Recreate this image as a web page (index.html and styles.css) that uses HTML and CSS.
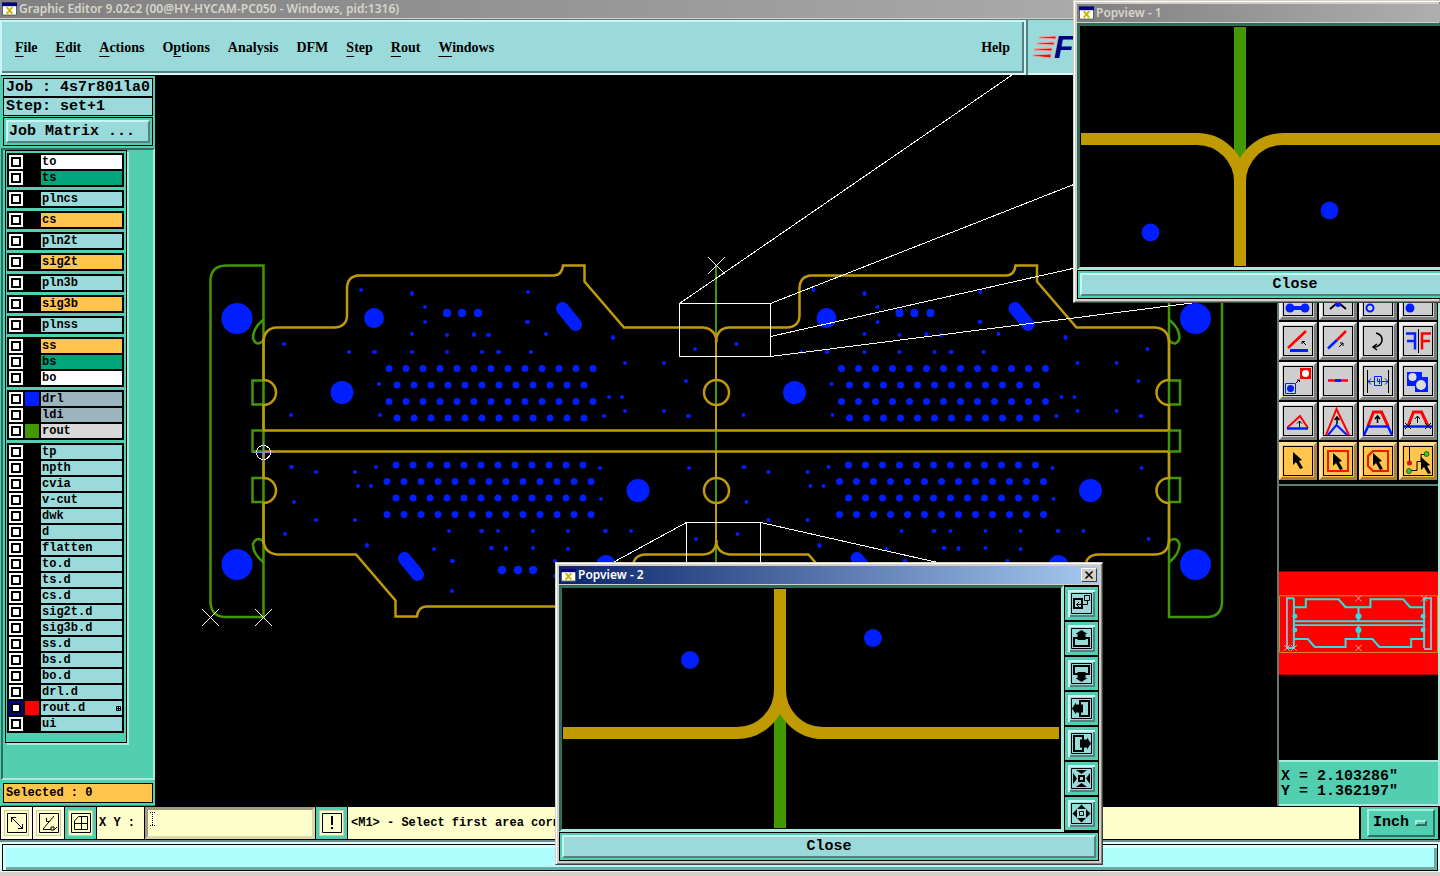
FILE: index.html
```html
<!DOCTYPE html>
<html lang="en">
<head>
<meta charset="utf-8">
<title>Graphic Editor</title>
<link rel="stylesheet" href="styles.css">
</head>
<body>
<svg class="defs" aria-hidden="true">
  <defs>
    <symbol id="app" viewBox="0 0 16 14">
      <path fill="#fff" stroke="#555" d="M.5 .5h15v13H.5z"/><path fill="#000080" d="M0 0h16v4H0z"/><path stroke="#c5b800" stroke-width="2" d="M5 5l6 7M11 5l-6 7"/>
    </symbol>
    <symbol id="cursor" viewBox="0 0 10 18">
      <path d="M0 0l9 8-3 1 4 7-3 1-4-7-3 3z"/>
    </symbol>
  </defs>
</svg>

<header class="titlebar titlebar-off"><svg class="app-icon"><use href="#app"/></svg><span>Graphic Editor 9.02c2 (00@HY-HYCAM-PC050 - Windows, pid:1316)</span></header>

<div class="top">
  <nav class="menu">
    <button><u>F</u>ile</button><button><u>E</u>dit</button><button><u>A</u>ctions</button><button>O<u>p</u>tions</button><button>Analysis</button><button>DFM</button><button><u>S</u>tep</button><button><u>R</u>out</button><button><u>W</u>indows</button><button class="help">Help</button>
  </nav>
  <div class="logo">
    <svg width="26" height="24" viewBox="0 0 26 24"><path d="M6 2l17-1v3L6 3zM4 8l17-1v3L4 9zM1 14l18-1v3L1 15zM0 20l18-1v4L0 21z" fill="#e01010" stroke="#f6a0a0" stroke-width="1"/></svg><b>Fr</b>
  </div>
</div>

<main class="workspace">
  <aside class="side">
    <div class="job">
      <div class="field">Job : 4s7r801la0</div>
      <div class="field">Step: set+1</div>
      <div class="matrix"><button>Job Matrix ...</button></div>
    </div>
    <div class="layers">
      <div class="list">
        <div class="group">
          <label class="row white"><input type="checkbox"><i></i><span>to</span></label>
          <label class="row green"><input type="checkbox"><i></i><span>ts</span></label>
        </div>
        <div class="group"><label class="row"><input type="checkbox"><i></i><span>plncs</span></label></div>
        <div class="group"><label class="row amber"><input type="checkbox"><i></i><span>cs</span></label></div>
        <div class="group"><label class="row"><input type="checkbox"><i></i><span>pln2t</span></label></div>
        <div class="group"><label class="row amber"><input type="checkbox"><i></i><span>sig2t</span></label></div>
        <div class="group"><label class="row"><input type="checkbox"><i></i><span>pln3b</span></label></div>
        <div class="group"><label class="row amber"><input type="checkbox"><i></i><span>sig3b</span></label></div>
        <div class="group"><label class="row"><input type="checkbox"><i></i><span>plnss</span></label></div>
        <div class="group">
          <label class="row amber"><input type="checkbox"><i></i><span>ss</span></label>
          <label class="row green"><input type="checkbox"><i></i><span>bs</span></label>
          <label class="row white"><input type="checkbox"><i></i><span>bo</span></label>
        </div>
        <div class="group">
          <label class="row slate"><input type="checkbox"><i class="sw-blue"></i><span>drl</span></label>
          <label class="row slate"><input type="checkbox"><i></i><span>ldi</span></label>
          <label class="row gray"><input type="checkbox"><i class="sw-green"></i><span>rout</span></label>
        </div>
        <div class="group">
          <label class="row"><input type="checkbox"><i></i><span>tp</span></label>
          <label class="row"><input type="checkbox"><i></i><span>npth</span></label>
          <label class="row"><input type="checkbox"><i></i><span>cvia</span></label>
          <label class="row"><input type="checkbox"><i></i><span>v-cut</span></label>
          <label class="row"><input type="checkbox"><i></i><span>dwk</span></label>
          <label class="row"><input type="checkbox"><i></i><span>d</span></label>
          <label class="row"><input type="checkbox"><i></i><span>flatten</span></label>
          <label class="row"><input type="checkbox"><i></i><span>to.d</span></label>
          <label class="row"><input type="checkbox"><i></i><span>ts.d</span></label>
          <label class="row"><input type="checkbox"><i></i><span>cs.d</span></label>
          <label class="row"><input type="checkbox"><i></i><span>sig2t.d</span></label>
          <label class="row"><input type="checkbox"><i></i><span>sig3b.d</span></label>
          <label class="row"><input type="checkbox"><i></i><span>ss.d</span></label>
          <label class="row"><input type="checkbox"><i></i><span>bs.d</span></label>
          <label class="row"><input type="checkbox"><i></i><span>bo.d</span></label>
          <label class="row"><input type="checkbox"><i></i><span>drl.d</span></label>
          <label class="row"><input type="checkbox" checked><i class="sw-red"></i><span>rout.d<svg width="5" height="5" viewBox="0 0 5 5"><path fill="none" stroke="#000" d="M.5 .5h4v4h-4zM2.500 0v5M0 2.500h5"/></svg></span></label>
          <label class="row"><input type="checkbox"><i></i><span>ui</span></label>
        </div>
      </div>
    </div>
    <div class="selected"><div>Selected : 0</div></div>
  </aside>

  <section class="canvas">
    <svg>
      <defs>
        <g id="holes" fill="none" stroke="#001eff" stroke-linecap="round">
          <path stroke-width="20" d="M374 318h0"/>
          <path stroke-width="23" d="M342 392.500h0"/>
          <path stroke-width="13" d="M562.500 308.500L575.500 324.500"/>
          <path stroke-width="7" stroke-dasharray="0 17" d="M389 368.500H594M397 385H585M389 401.500H594M397 418H585"/>
          <path stroke="none" fill="#001eff" d="M445 309h4l2 2v4l-2 2h-4l-2-2v-4zM460 309h4l2 2v4l-2 2h-4l-2-2v-4zM476 309h4l2 2v4l-2 2h-4l-2-2v-4z"/>
          <path stroke-width="4" d="M361 290h0M412 293v1M425 307h0M425 322h0M412 334h0M447 335h0M474 334v1M488 335h1M284 344h0M349 352h0M374 352h1M412 352h0M447 352h0M482 352h0M498 352h1M379 384h0M380 415h0M291 415h0M528 292h0M527 322h1M546 334h0M613 337v1M531 352h0M625 363h0M664 363h0M686 381h0M609 397h0M622 397h0M625 411h0M664 411h0M604 416h0M688 416h1M695 349h0"/>
        </g>
        <path id="outline" d="M263.500 342Q264 328 277 327.500H334Q347 327 347 315V289Q347 276 359 275.500H554Q562 275 563 265.500H584.500V281.500L624 327.500H703Q716 329 716.500 342"/>
        <g id="edge" fill="none" stroke-width="3">
          <path stroke="#439706" stroke-width="2.500" d="M263.500 265.500H226Q210.500 266 210.500 281V602Q211 617 226 617H263.500ZM263 320Q253 328 253 338Q256 347 263 341M263 562Q253 554 253 544Q256 536 263 541M263.500 380.500H252.500V404.500H263.500M263.500 430.500H252.500V451.500H263.500M263.500 478H252.500V502H263.500"/>
          <path stroke="#c09a0a" stroke-width="2.500" d="M263.500 338V380A12.500 12.500 0 0 1 263.500 405V430.500M263.500 451.500V478A12.500 12.500 0 0 1 263.500 503V544"/>
          <path stroke="none" fill="#001eff" d="M221.500 318.500a15.500 15.500 0 0 1 31 0a15.500 15.500 0 0 1 -31 0M221.500 564.500a15.500 15.500 0 0 1 31 0a15.500 15.500 0 0 1 -31 0"/>
        </g>
        <path id="mark" stroke="#fff" d="M-8 -8L9 9M9 -8L-8 9"/>
      </defs>
      <g transform="translate(-155 -75)">
        <use href="#holes"/><use href="#holes" x="452.500"/>
        <g transform="rotate(180 490 441.500)"><use href="#holes"/><use href="#holes" x="-452.500"/></g>
        <path stroke="#439706" stroke-width="2" d="M716 265V600"/>
        <use href="#edge"/><use href="#edge" transform="translate(1432.500 0) scale(-1 1)"/>
        <g fill="none" stroke="#c09a0a" stroke-width="2.500">
          <use href="#outline"/><use href="#outline" x="452.500"/>
          <g transform="rotate(180 490 441)"><use href="#outline"/><use href="#outline" x="-452.500"/></g>
          <path d="M263 430.500H1168.500M263 451.500H1168.500"/>
          <path stroke-width="2" d="M716 336V380M716 405V430M716 452V478M716 503V545"/>
          <circle cx="716.500" cy="392.500" r="12.500"/><circle cx="716.500" cy="490.500" r="12.500"/>
        </g>
        <g fill="none" stroke="#fff" shape-rendering="crispEdges">
          <path d="M679.500 303.500H770.500V356.500H679.500ZM679.500 303.500L1012 75M770.500 303.500L1075 184M770.500 336.500L1075 268M770.500 356.500L1192 303M686.500 600V522.500H760.500V600M686.500 522.500L612 563M760.500 522.500L940 563"/>
          <use href="#mark" x="716" y="265"/><use href="#mark" x="210" y="617"/><use href="#mark" x="263" y="617"/>
          <circle cx="263.500" cy="452.500" r="7"/><path stroke="#8d86d8" d="M253 452.500h21M263.500 442v21"/>
        </g>
      </g>
    </svg>
  </section>

  <aside class="tools">
    <div class="palette">
      <button aria-label="Connect"><svg viewBox="0 0 30 30"><g fill="#001eff"><circle cx="7" cy="22" r="4.500"/><circle cx="22" cy="22" r="4.500"/><path d="M7 20h15v4H7z"/></g></svg></button>
      <button aria-label="Split"><svg viewBox="0 0 30 30"><path d="M7 23l6-5h4l6 5" fill="none" stroke="#000" stroke-width="2"/><circle cx="15" cy="18" r="3" fill="#001eff"/></svg></button>
      <button aria-label="Copy"><svg viewBox="0 0 30 30"><circle cx="7" cy="22" r="3.500" fill="none" stroke="#001eff" stroke-width="2"/><path d="M12 17l6-6" stroke="#000" stroke-dasharray="2 1"/></svg></button>
      <button aria-label="Move"><svg viewBox="0 0 30 30"><circle cx="7" cy="22" r="4.500" fill="#001eff"/><path d="M12 17l6-6" stroke="#000" stroke-dasharray="2 1"/></svg></button>

      <button aria-label="Angle"><svg viewBox="0 0 30 30" fill="none" stroke-width="2.500"><path stroke="#f00" d="M23 5L5 22"/><path stroke="#001eff" stroke-width="3" d="M7 24.500h18"/><path stroke="#000" stroke-width="1" d="M23 19l-4-4M19 18v-2.500h3"/></svg></button>
      <button aria-label="Extend"><svg viewBox="0 0 30 30" fill="none" stroke-width="2.500"><path stroke="#f00" d="M23 5L14 14"/><path stroke="#001eff" d="M14 14L5 22.500"/><path stroke="#000" stroke-width="1" d="M16 21l4-4M17 17h3v3"/></svg></button>
      <button aria-label="Rotate"><svg viewBox="0 0 30 30" fill="none" stroke="#000" stroke-width="1.500"><path d="M13 7Q20 9 19 15Q17 21 11 21M14 18l-4 3 4 3"/></svg></button>
      <button aria-label="Mirror"><svg viewBox="0 0 30 30" fill="none" stroke-width="2.500"><path stroke="#001eff" d="M3 7.500h9v16M12 15H4"/><path stroke="#f00" d="M28 7.500h-9v16M19 15h8"/><path stroke="#000" stroke-width="1" d="M15.500 3v24"/></svg></button>

      <button aria-label="Replace"><svg viewBox="0 0 30 30"><path fill="#f00" d="M17 2h11v11H17z"/><circle cx="22.500" cy="7.500" r="3.500" fill="#fff"/><path fill="none" stroke="#001eff" d="M2.500 17.500h10v10h-10z"/><circle cx="7.500" cy="22.500" r="3.500" fill="#001eff"/><path fill="none" stroke="#000" d="M13 17l3-3M14 14h2.500v2"/></svg></button>
      <button aria-label="Trim"><svg viewBox="0 0 30 30"><path stroke="#f00" stroke-width="2.500" d="M5 14.500h20"/><path stroke="#001eff" stroke-width="3" d="M12 14.500h6"/></svg></button>
      <button aria-label="Spacing"><svg viewBox="0 0 30 30" fill="none" stroke="#001eff"><path stroke="#000" d="M4.500 4v23M25.500 4v23"/><path d="M5 15.500h6M19 15.500h6M8 12.500l-3 3 3 3M22 12.500l3 3-3 3M11.500 10.500h7v9h-7zM14.500 12v3.500h3M16.500 13v5"/></svg></button>
      <button aria-label="Merge"><svg viewBox="0 0 30 30"><path fill="#001eff" d="M4 6h15v5h6v15H12v-6H4z"/><circle cx="9.500" cy="11" r="4" fill="#ddd"/><circle cx="18" cy="19" r="5" fill="#ddd"/></svg></button>

      <button aria-label="Triangle"><svg viewBox="0 0 30 30" fill="none" stroke-width="2"><path stroke="#f00" d="M4 22L17 10L25 22"/><path stroke="#001eff" stroke-width="2.500" d="M4 22.500h21"/><path stroke="#000" stroke-width="1" d="M16.500 21v-6M14 17.500l2.500-2.500 2.500 2.500"/></svg></button>
      <button aria-label="Peak"><svg viewBox="0 0 30 30" fill="none" stroke-width="2"><path stroke="#f00" d="M3 29L13.500 3L26 29"/><path stroke="#001eff" d="M5 29L13.500 19L24 29"/><path stroke="#000" d="M14 18v-7M11.500 14l2.500-3 2.500 3" stroke-width="1.500"/></svg></button>
      <button aria-label="Trapezoid"><svg viewBox="0 0 30 30" fill="none" stroke-width="3"><path stroke="#f00" d="M5 20L10.500 6h8L25 20"/><path stroke="#001eff" stroke-width="2.500" d="M1 29L5 20.500H25L29 29"/><path stroke="#000" d="M14.500 17v-7M12 13l2.500-3 2.500 3" stroke-width="1.500"/></svg></button>
      <button aria-label="Line trapezoid"><svg viewBox="0 0 30 30" fill="none" stroke-width="3"><path stroke="#f00" d="M5 20L10.500 6h8L25 20"/><path stroke="#001eff" stroke-width="2.500" d="M1 20.500h28"/><path stroke="#000" stroke-width="1" d="M14.500 17v-7M12 13l2.500-3 2.500 3M2 17l6 6M8 17l-6 6M22 17l6 6M28 17l-6 6"/></svg></button>

      <button class="amber" aria-label="Select"><svg viewBox="0 0 30 30"><use href="#cursor" x="10" y="6" width="10" height="18"/></svg></button>
      <button class="amber" aria-label="Select in rectangle"><svg viewBox="0 0 30 30"><path fill="none" stroke="#f01800" stroke-width="2" d="M5 5h20v20H5z"/><use href="#cursor" x="10" y="7" width="10" height="18"/></svg></button>
      <button class="amber" aria-label="Select in polygon"><svg viewBox="0 0 30 30"><path fill="none" stroke="#f01800" stroke-width="2" d="M10 5h15v20H10l-5-5V10z"/><use href="#cursor" x="10" y="7" width="10" height="18"/></svg></button>
      <button class="amber" aria-label="Select net"><svg viewBox="0 0 30 30"><path fill="none" stroke="#000" d="M6.500 1v14M6 24.500h8v-9h4V8.500h5"/><circle cx="6.500" cy="17" r="2.500" fill="#e01010"/><circle cx="6" cy="25" r="2.500" fill="#1fd32c" stroke="#000" stroke-width=".5"/><circle cx="23.500" cy="8" r="2.500" fill="#1fd32c" stroke="#000" stroke-width=".5"/><use href="#cursor" x="18" y="11" width="10" height="18"/></svg></button>
    </div>
    <div class="overview">
      <svg viewBox="0 0 160 276">
        <path fill="#f00" d="M0 86h160v104H0z"/>
        <path fill="none" stroke="#d98a18" d="M.5 110.500h159v57H.5z"/>
        <g fill="none" stroke="#30dfe4" stroke-width="2">
          <path d="M15 122H27V114H60L67 122H92V114H125L132 122H145M15 136H146M15 140H146M15 154H29L36 162H67V154H94L101 162H133V154H145M80 122V136M80 140V154M15 113V163M146 113V163M8 113H15M8 163H15M146 113H153"/>
          <path stroke="#a9a9b8" d="M8 112V164M153 112V164H146"/>
        </g>
        <g fill="#30dfe4"><circle cx="80" cy="131" r="3"/><circle cx="80" cy="145" r="3"/><circle cx="16" cy="131" r="2.500"/><circle cx="16" cy="145" r="2.500"/><circle cx="145" cy="131" r="2.500"/><circle cx="145" cy="145" r="2.500"/></g>
        <path stroke="#d6b0a8" d="M77 110l6 6M83 110l-6 6M77 160l6 6M83 160l-6 6M143 110l6 6M149 110l-6 6M5 160l6 6M11 160l-6 6M12 160l6 6M18 160l-6 6"/>
      </svg>
    </div>
    <div class="coords">X = 2.103286"<br>Y = 1.362197"</div>
  </aside>
</main>

<div class="command">
  <button aria-label="Zoom area"><svg viewBox="0 0 20 20"><path d="M.5 .5h19v19H.5zM4.500 4.500l11 11M4.500 9V4.500H9M15.500 11v4.500H11" fill="none" stroke="#000"/></svg></button>
  <button aria-label="Angle readout"><svg viewBox="0 0 20 20"><path d="M.5 .5h19v19H.5zM4 16L15 3M4 16.500h8M7.500 5v3.500h3M12 14h3v3h-3zM15 17l3-3" fill="none" stroke="#000"/></svg></button>
  <button class="on" aria-label="Grid"><svg viewBox="0 0 20 20"><path d="M.5 .5h19v19H.5zM3.500 8l4-4.500h9v13h-13zM10.500 3v13M3 10.500h13" fill="none" stroke="#000"/></svg></button>
  <label for="xy">X Y :</label>
  <div class="entry"><input id="xy" type="text"><svg width="5" height="14" viewBox="0 0 5 14"><path fill="none" stroke="#000" stroke-dasharray="1 1" d="M0 .5h5M2.500 0v14M0 13.500h5"/></svg></div>
  <button class="on" aria-label="Alert"><svg viewBox="0 0 20 20"><path d="M.5 .5h19v19H.5z" fill="none" stroke="#000"/><path d="M9 3h2v9H9zM9 14h2v2H9z"/></svg></button>
  <output>&lt;M1&gt; - Select first area corner</output>
  <div class="unit"><button>Inch<i></i></button></div>
</div>
<footer class="status"><div></div></footer>

<section class="win win-1">
  <header class="titlebar titlebar-off"><svg class="app-icon"><use href="#app"/></svg><span>Popview - 1</span></header>
  <div class="view">
    <svg width="430" height="241" viewBox="1080 26 430 241"><path stroke="#439700" stroke-width="12" d="M1240 27V170"/><g fill="none" stroke="#bf9a00" stroke-width="12"><path d="M1081 139H1197A43 43 0 0 1 1240 182V266M1510 139H1283A43 43 0 0 0 1240 182"/></g><g fill="#001eff"><circle cx="1150.500" cy="232.500" r="9"/><circle cx="1329.500" cy="210.500" r="9"/></g></svg>
  </div>
  <div class="close"><button>Close</button></div>
</section>

<section class="win win-2">
  <header class="titlebar"><svg class="app-icon"><use href="#app"/></svg><span>Popview - 2</span><button class="x" aria-label="Close window"><svg width="8" height="8" viewBox="0 0 8 8"><path stroke="#000" stroke-width="1.500" d="M.5 .5l7 7M7.500 .5l-7 7"/></svg></button></header>
  <div class="pane">
    <div class="view">
      <svg width="498" height="241" viewBox="562 588 498 241"><path stroke="#439700" stroke-width="12" d="M780 700V828"/><g fill="none" stroke="#bf9a00" stroke-width="12"><path d="M563 733H737A43 43 0 0 0 780 690V589M1059 733H823A43 43 0 0 1 780 690"/></g><g fill="#001eff"><circle cx="690" cy="660" r="9"/><circle cx="873" cy="638" r="9"/></g></svg>
    </div>
    <div class="pan">
      <button aria-label="Transfer"><svg viewBox="0 0 21 21" fill="none" stroke="#000"><path d="M.5 .5h20v20H.5z"/><path stroke-width="2" d="M3 6h8v9H3z"/><path d="M13.500 2.500h5v5h-5zM16.500 8v3.500H6M8 9l-2.500 2.500L8 14"/></svg></button>
      <button aria-label="Up"><svg viewBox="0 0 21 21"><path fill="none" stroke="#000" d="M.5 .5h20v20H.5z"/><path fill="none" stroke="#000" stroke-width="2" d="M7 10H3v8h15v-8h-4"/><path d="M10.500 2l6 4h-2v6h-8V6h-2z"/></svg></button>
      <button aria-label="Down"><svg viewBox="0 0 21 21"><path fill="none" stroke="#000" d="M.5 .5h20v20H.5z"/><path fill="none" stroke="#000" stroke-width="2" d="M7 11H3V3h15v8h-4"/><path d="M10.500 19l6-4h-2V9h-8v6h-2z"/></svg></button>
      <button aria-label="Left"><svg viewBox="0 0 21 21"><path fill="none" stroke="#000" d="M.5 .5h20v20H.5z"/><path fill="none" stroke="#000" stroke-width="2" d="M9 7V3h9v15H9v-4"/><path d="M1 10.500l4-6v2h7v8H5v2z"/></svg></button>
      <button aria-label="Right"><svg viewBox="0 0 21 21"><path fill="none" stroke="#000" d="M.5 .5h20v20H.5z"/><path fill="none" stroke="#000" stroke-width="2" d="M12 7V3H3v15h9v-4"/><path d="M20 10.500l-4-6v2H9v8h7v2z"/></svg></button>
      <button aria-label="Zoom in"><svg viewBox="0 0 21 21"><path fill="none" stroke="#000" d="M.5 .5h20v20H.5z"/><path fill="none" stroke="#000" stroke-width="2" d="M8 8h5v5H8z"/><path d="M5 2h11l-5.500 4zM5 19h11l-5.500-4zM2 5v11l4-5.500zM19 5v11l-4-5.500z"/></svg></button>
      <button aria-label="Zoom out"><svg viewBox="0 0 21 21"><path fill="none" stroke="#000" d="M.5 .5h20v20H.5zM8.500 8.500h4v4h-4z"/><path d="M6 6h9l-4.500-4.500zM6 15h9l-4.500 4.500zM6 6v9l-4.500-4.500zM15 6v9l4.500-4.500z"/></svg></button>
    </div>
  </div>
  <div class="close"><button>Close</button></div>
</section>
</body>
</html>
```
FILE: styles.css
```css
:root {
  --teal: #52ceb0;
  --teal-light: #a4ecdc;
  --teal-dark: #2a7060;
  --aqua: #9bdada;
  --aqua-light: #c8f6f4;
  --aqua-dark: #557f80;
  --cream: #ffffcc;
  --amber: #ffc54d;
  --frame: #d4d0c8;
  --mono: "Liberation Mono", "Courier New", monospace;
}
* { box-sizing: border-box; }
body {
  margin: 0;
  min-height: 100vh;
  position: relative;
  overflow: hidden;
  display: flex;
  flex-direction: column;
  background: #000;
  color: #000;
  font: bold 12px/14px var(--mono);
}
button {
  margin: 0;
  padding: 0;
  border: 0;
  border-radius: 0;
  background: none;
  color: inherit;
  font: inherit;
}
.defs { position: absolute; width: 0; height: 0; }

.titlebar {
  display: flex;
  align-items: center;
  gap: 2px;
  height: 18px;
  padding: 0 2px;
  background: linear-gradient(90deg, #0a246a, #a6caf0);
  color: #fff;
  font: 600 12px/18px "Noto Sans", sans-serif;
  white-space: nowrap;
}
.titlebar-off { background: linear-gradient(90deg, #808080, #b8b8b8); color: #d8d4cc; }
.app-icon { width: 15px; height: 14px; flex: none; }

.top { display: flex; height: 57px; border-top: 1px solid var(--frame); background: var(--aqua-dark); padding-top: 1px; }
.menu {
  flex: 0 0 1026px;
  display: flex;
  align-items: center;
  gap: 18px;
  padding: 0 14px 0 13px;
  background: var(--aqua);
  border: 2px solid var(--aqua-light);
  border-bottom-color: #dff8f6;
  box-shadow: inset -2px -2px var(--aqua-dark);
  font: bold 14px/20px "Liberation Serif", serif;
}
.menu u { text-underline-offset: 4px; text-decoration-thickness: 1px; }
.help { margin-left: auto; }
.logo {
  flex: 1;
  display: flex;
  align-items: center;
  margin-left: 2px;
  padding-left: 5px;
  overflow: hidden;
  background: var(--aqua);
  border-bottom: 2px solid #dff8f6;
}
.logo svg { flex: none; }
.logo b { font: italic bold 32px/32px "Liberation Sans", sans-serif; color: #000080; margin-left: -5px; }

.workspace { flex: 1; display: grid; grid-template-columns: 155px 1fr 163px; }
.side { display: flex; flex-direction: column; padding-left: 1px; background: var(--teal); }
.job { padding: 2px; font-size: 15px; line-height: 17px; border-top: 1px solid #000; }
.field { border: 1px solid #000; background: var(--aqua); padding-left: 2px; white-space: nowrap; }
.matrix { margin-top: 1px; border: 1px solid #000; padding: 2px; }
.matrix button {
  display: block;
  width: 100%;
  padding: 1px;
  text-align: left;
  line-height: 17px;
  background: var(--aqua);
  border: 2px solid;
  border-color: var(--aqua-light) var(--aqua-dark) var(--aqua-dark) var(--aqua-light);
}
.layers {
  flex: 1;
  border: 2px solid;
  border-color: var(--teal-dark) var(--teal-light) var(--teal-light) var(--teal-dark);
}
.list {
  width: 122px;
  margin-left: 2px;
  padding: 2px 2px 9px 1px;
  display: flex;
  flex-direction: column;
  gap: 3px;
  border: 1px solid #000;
  box-shadow: 2px 2px var(--teal-light);
}
.group { display: flex; flex-direction: column; gap: 2px; padding: 2px; background: #000; }
.row { display: flex; gap: 2px; height: 14px; }
.row input {
  appearance: none;
  flex: none;
  width: 14px;
  height: 14px;
  margin: 0;
  border: 2px solid #fff;
  background: #fff;
  box-shadow: inset 0 0 0 2px #000;
}
.row input:checked { border-color: #000090; }
.row i { width: 14px; }
.sw-blue { background: #001eff; }
.sw-green { background: #439700; }
.sw-red { background: #f00; }
.row span { flex: 1; display: flex; align-items: center; justify-content: space-between; padding: 0 1px; background: var(--aqua); }
.white span { background: #fff; }
.green span { background: #00a57c; }
.row.amber span { background: var(--amber); }
.slate span { background: #9bb4bd; }
.gray span { background: #d9d9d9; }
.selected { padding: 3px 2px 2px; border-bottom: 1px solid #3b9680; }
.selected div { border: 1px solid #000; background: var(--amber); padding: 2px; }

.canvas { display: flex; min-width: 0; overflow: hidden; }
.canvas svg { flex: 1; width: 100%; }

.tools { display: flex; flex-direction: column; justify-content: flex-end; border-left: 2px solid #687674; border-right: 2px solid var(--teal-light); }
.palette {
  display: grid;
  grid-template-columns: repeat(4, 38px);
  gap: 2px;
  padding-bottom: 4px;
  border-bottom: 2px solid #5a817a;
}
.palette button {
  height: 38px;
  padding: 1px;
  background: #cecece;
  border: 3px solid;
  border-color: #efefef #7d7d7d #7d7d7d #efefef;
}
.palette svg { display: block; width: 30px; height: 30px; box-shadow: inset 0 0 0 1px #000; }
.palette .amber { background: var(--amber); border-color: #ffe09a #a88238 #a88238 #ffe09a; }
.overview svg { display: block; width: 100%; }
.coords {
  padding: 7px 2px 5px;
  background: var(--teal);
  border-top: 2px solid var(--teal-light);
  border-bottom: 2px solid var(--teal-light);
  font-size: 15px;
  line-height: 15px;
}

.command { display: flex; align-items: stretch; gap: 1px; height: 34px; padding: 1px 2px 1px 1px; background: #000; }
.command > button { flex: none; width: 31px; padding: 3px; background: var(--cream); border: 2px solid #fffff0; outline: 1px solid #cfcca0; outline-offset: -4px; }
.command > .on { border-color: var(--teal); border-width: 3px; padding: 2px; }
.command > button svg { display: block; width: 20px; height: 20px; margin: auto; }
.command label { width: 47px; padding-left: 2px; background: var(--cream); line-height: 33px; }
.entry { display: grid; width: 170px; }
.entry > * { grid-area: 1 / 1; }
.entry input {
  width: 100%;
  border: 3px solid;
  border-color: #a09c7c #dcd9a8 #dcd9a8 #a09c7c;
  border-radius: 0;
  background: var(--cream);
  font: inherit;
}
.entry svg { margin: 5px; }
.command output { flex: 1; padding-left: 3px; background: var(--cream); line-height: 33px; white-space: nowrap; overflow: hidden; }
.unit { width: 77px; margin-left: 1px; padding: 2px 3px 2px 6px; background: var(--teal); }
.unit button {
  display: flex;
  align-items: center;
  justify-content: space-between;
  width: 100%;
  height: 100%;
  padding: 0 6px 0 4px;
  border: 2px solid;
  border-color: var(--teal-light) var(--teal-dark) var(--teal-dark) var(--teal-light);
  font-size: 15px;
}
.unit i { width: 12px; height: 6px; border: 2px solid; border-color: var(--teal-light) var(--teal-dark) var(--teal-dark) var(--teal-light); }
.status { padding: 2px 2px 1px; background: #dff; border-top: 2px solid #708c8c; border-bottom: 4px solid var(--frame); }
.status div {
  height: 27px;
  background: #b0ffff;
  border: 1px solid #000;
  box-shadow: inset 3px 3px #d4ffff, inset -3px -3px #70a8a8;
}

.win {
  position: absolute;
  border: 1px solid;
  border-color: var(--frame) #404040 #404040 var(--frame);
  padding: 3px;
  background: var(--frame);
  box-shadow: inset 1px 1px #fff, inset -1px -1px #808080;
}
.win-1 { left: 1073px; top: 0; right: 0; padding-right: 0; border-right: 0; overflow: hidden; }
.win-1 > * { width: 436px; }
.win-2 { left: 555px; top: 562px; width: 548px; }
.win .titlebar { margin-bottom: 1px; }
.view { flex: 1; overflow: hidden; background: #000; border: 3px solid; border-color: #2f6b5a var(--teal-light) var(--teal-light) #2f6b5a; }
.view svg { display: block; }
.pane { display: flex; background: #000; }
.pan { display: grid; grid-auto-rows: 33px; gap: 2px; padding: 2px 1px 0; }
.pan button {
  width: 33px;
  padding: 3px;
  background: var(--aqua);
  border: 3px solid var(--teal);
  box-shadow: inset 2px 2px var(--aqua-light), inset -2px -2px var(--aqua-dark);
}
.pan svg { display: block; width: 21px; height: 21px; }
.close { padding: 2px; background: var(--teal); border: 1px solid #000; }
.close button {
  display: block;
  width: 100%;
  height: 23px;
  background: var(--aqua);
  border: 2px solid;
  border-color: var(--aqua-light) var(--aqua-dark) var(--aqua-dark) var(--aqua-light);
  font-size: 15px;
}
.x {
  margin-left: auto;
  width: 16px;
  height: 14px;
  display: grid;
  place-items: center;
  background: var(--frame);
  border: 1px solid;
  border-color: #fff #404040 #404040 #fff;
}
```
